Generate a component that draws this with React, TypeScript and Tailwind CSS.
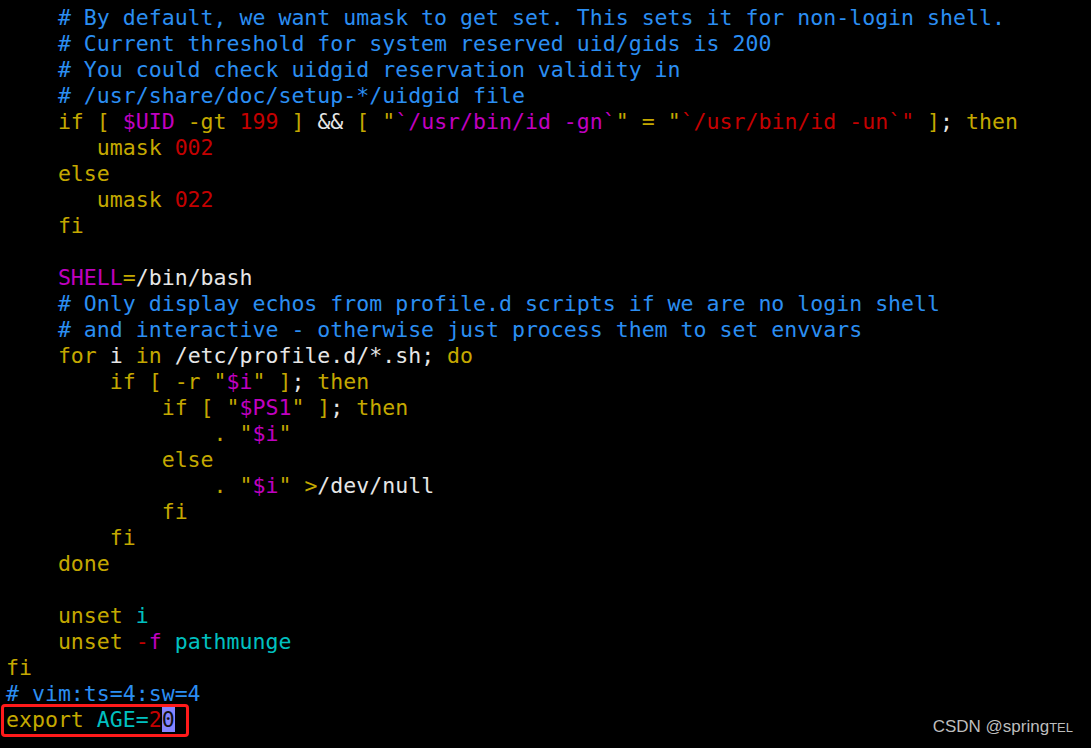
const C: Record<string, string> = {
  b: "text-[#2b8ef2]",
  y: "text-[#c4a800]",
  m: "text-[#c000c0]",
  r: "text-[#c40000]",
  c: "text-[#00c0c0]",
  w: "text-[#e6e6e6]",
};

type Seg = [string, string];

const lines: Seg[][] = [
  [["    # By default, we want umask to get set. This sets it for non-login shell.", "b"]],
  [["    # Current threshold for system reserved uid/gids is 200", "b"]],
  [["    # You could check uidgid reservation validity in", "b"]],
  [["    # /usr/share/doc/setup-*/uidgid file", "b"]],
  [
    ["    if [ ", "y"], ["$UID", "m"], [" -gt ", "y"], ["199", "r"], [" ] ", "y"], ["&&", "w"],
    [" [ \"", "y"], ["`/usr/bin/id -gn`", "m"], ["\" = \"", "y"], ["`/usr/bin/id -un`\"", "r"],
    [" ]", "y"], [";", "w"], [" then", "y"],
  ],
  [["       umask ", "y"], ["002", "r"]],
  [["    else", "y"]],
  [["       umask ", "y"], ["022", "r"]],
  [["    fi", "y"]],
  [],
  [["    SHELL", "m"], ["=", "y"], ["/bin/bash", "w"]],
  [["    # Only display echos from profile.d scripts if we are no login shell", "b"]],
  [["    # and interactive - otherwise just process them to set envvars", "b"]],
  [["    for ", "y"], ["i ", "w"], ["in ", "y"], ["/etc/profile.d/*.sh", "w"], [";", "w"], [" do", "y"]],
  [["        if [ -r \"", "y"], ["$i", "m"], ["\" ]", "y"], [";", "w"], [" then", "y"]],
  [["            if [ \"", "y"], ["$PS1", "m"], ["\" ]", "y"], [";", "w"], [" then", "y"]],
  [["                . \"", "y"], ["$i", "m"], ["\"", "y"]],
  [["            else", "y"]],
  [["                . \"", "y"], ["$i", "m"], ["\" >", "y"], ["/dev/null", "w"]],
  [["            fi", "y"]],
  [["        fi", "y"]],
  [["    done", "y"]],
  [],
  [["    unset ", "y"], ["i", "c"]],
  [["    unset ", "y"], ["-", "r"], ["f ", "m"], ["pathmunge", "c"]],
  [["fi", "y"]],
  [["# vim:ts=4:sw=4", "b"]],
];

export default function App() {
  return (
    <div
      className="relative w-[1091px] h-[748px] overflow-hidden bg-black pl-[6px] pt-[5px]"
      style={{ fontFamily: '"DejaVu Sans Mono", monospace' }}
    >
      <div className="text-[21.55px] leading-[26px] whitespace-pre">
        {lines.map((segs, i) => (
          <div key={i} className="h-[26px]">
            {segs.map(([t, k], j) => (
              <span key={j} className={C[k]}>{t}</span>
            ))}
          </div>
        ))}
        <div className="relative h-[26px]">
          <span className={C.y}>export </span>
          <span className={C.c}>AGE=</span>
          <span className={C.r}>2</span>
          <span className="bg-[#8484ff] text-[#101010]">0</span>
          <div className="absolute left-[-5px] top-[-3px] w-[188px] h-[33px] rounded-[4px] border-[3px] border-[#ff1a1a]" />
        </div>
      </div>
      <div
        className="absolute right-[18px] bottom-[9px] text-[17px] text-[#bdbdbd]"
        style={{ fontFamily: '"Liberation Sans", Arial, sans-serif' }}
      >
        CSDN @spring<span className="text-[13px]">TEL</span>
      </div>
    </div>
  );
}
